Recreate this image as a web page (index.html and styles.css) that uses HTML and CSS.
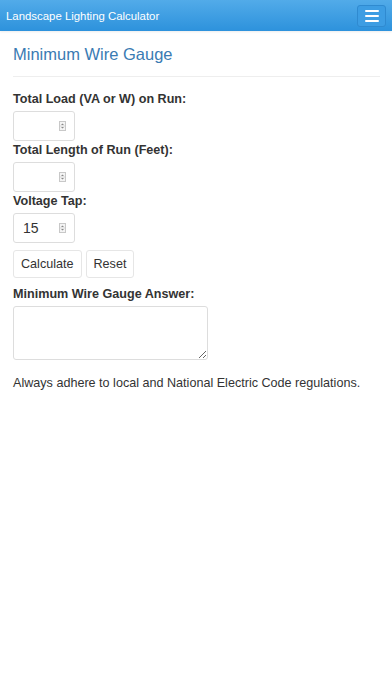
FILE: index.html
```html
<!DOCTYPE html>
<html lang="en">
<head>
    <meta charset="UTF-8">
    <meta name="viewport" content="width=device-width, initial-scale=1.0">
    <title>Landscape Lighting Calculator</title>
    <link rel="stylesheet" href="styles.css">
</head>
<body>
    <!-- Barre du haut -->
    <div class="navbar">
        <span class="brand">Landscape Lighting Calculator</span>
        <button class="toggle">
            <span></span><span></span><span></span>
        </button>
    </div>

    <div class="container">
        <h1 class="title">Minimum Wire Gauge</h1>
        <hr>

        <label class="lbl">Total Load (VA or W) on Run:</label>
        <div class="num-box">
            <span class="val"></span>
            <span class="spin"><svg width="7" height="10" viewBox="0 0 7 10"><rect x="0.5" y="0.5" width="6" height="9" fill="#f4f4f4" stroke="#c8c8c8"/><path d="M2 4 L3.5 2.5 L5 4Z M2 6 L3.5 7.5 L5 6Z" fill="#888"/><line x1="1" y1="5" x2="6" y2="5" stroke="#d8d8d8"/></svg></span>
        </div>

        <label class="lbl">Total Length of Run (Feet):</label>
        <div class="num-box">
            <span class="val"></span>
            <span class="spin"><svg width="7" height="10" viewBox="0 0 7 10"><rect x="0.5" y="0.5" width="6" height="9" fill="#f4f4f4" stroke="#c8c8c8"/><path d="M2 4 L3.5 2.5 L5 4Z M2 6 L3.5 7.5 L5 6Z" fill="#888"/><line x1="1" y1="5" x2="6" y2="5" stroke="#d8d8d8"/></svg></span>
        </div>

        <label class="lbl">Voltage Tap:</label>
        <div class="num-box">
            <span class="val">15</span>
            <span class="spin"><svg width="7" height="10" viewBox="0 0 7 10"><rect x="0.5" y="0.5" width="6" height="9" fill="#f4f4f4" stroke="#c8c8c8"/><path d="M2 4 L3.5 2.5 L5 4Z M2 6 L3.5 7.5 L5 6Z" fill="#888"/><line x1="1" y1="5" x2="6" y2="5" stroke="#d8d8d8"/></svg></span>
        </div>

        <div class="actions">
            <button class="btn">Calculate</button>
            <button class="btn">Reset</button>
        </div>

        <label class="lbl answer-lbl">Minimum Wire Gauge Answer:</label>
        <textarea class="answer"></textarea>

        <p class="note">Always adhere to local and National Electric Code regulations.</p>
    </div>
</body>
</html>
```

FILE: styles.css
```css
body {
    font-family: "Liberation Sans", Arial, sans-serif;
    margin: 0;
    padding: 0;
    background-color: #fff;
    color: #333;
}
.navbar {
    height: 31px;
    display: flex;
    align-items: center;
    justify-content: space-between;
    padding: 0 6px 0 6px;
    background: linear-gradient(#52abe9, #2d92dc);
    box-shadow: 0 1px 2px rgba(0,0,0,0.08);
}
.brand {
    color: #fff;
    font-size: 11.4px;
}
.toggle {
    width: 29px;
    height: 22px;
    padding: 0;
    border: 1px solid #2f8ad0;
    border-radius: 3px;
    background-color: #3d9de3;
    display: flex;
    flex-direction: column;
    align-items: center;
    justify-content: center;
    gap: 3px;
}
.toggle span {
    display: block;
    width: 14px;
    height: 2px;
    background-color: #fff;
    border-radius: 1px;
}
.container {
    padding: 0 12px 0 13px;
}
.title {
    font-size: 16.5px;
    font-weight: normal;
    line-height: 20px;
    color: #3a7bb3;
    margin: 13px 0 0 0;
}
hr {
    border: none;
    border-top: 1px solid #eee;
    margin: 12px 0 0 0;
}
.lbl {
    display: block;
    font-size: 12.6px;
    font-weight: bold;
    line-height: 16px;
    margin: 1px 0 4px 0;
}
hr + .lbl {
    margin-top: 14px;
}
.num-box {
    width: 62px;
    height: 30px;
    box-sizing: border-box;
    border: 1px solid #ddd;
    border-radius: 3px;
    display: flex;
    align-items: center;
    justify-content: space-between;
    padding: 0 8px 0 9px;
    font-size: 14px;
}
.spin {
    display: flex;
}
.actions {
    display: flex;
    gap: 4px;
    margin-top: 7px;
}
.btn {
    font-family: "Liberation Sans", Arial, sans-serif;
    font-size: 12.6px;
    color: #333;
    height: 28px;
    padding: 0 7px;
    background-color: #fff;
    border: 1px solid #e6e6e6;
    border-radius: 3px;
}
.answer-lbl {
    margin-top: 8px;
}
.answer {
    display: block;
    width: 195px;
    height: 54px;
    box-sizing: border-box;
    border: 1px solid #ddd;
    border-radius: 3px;
    margin: 0;
}
.note {
    font-size: 12.6px;
    line-height: 16px;
    margin: 15px 0 0 0;
}
```
